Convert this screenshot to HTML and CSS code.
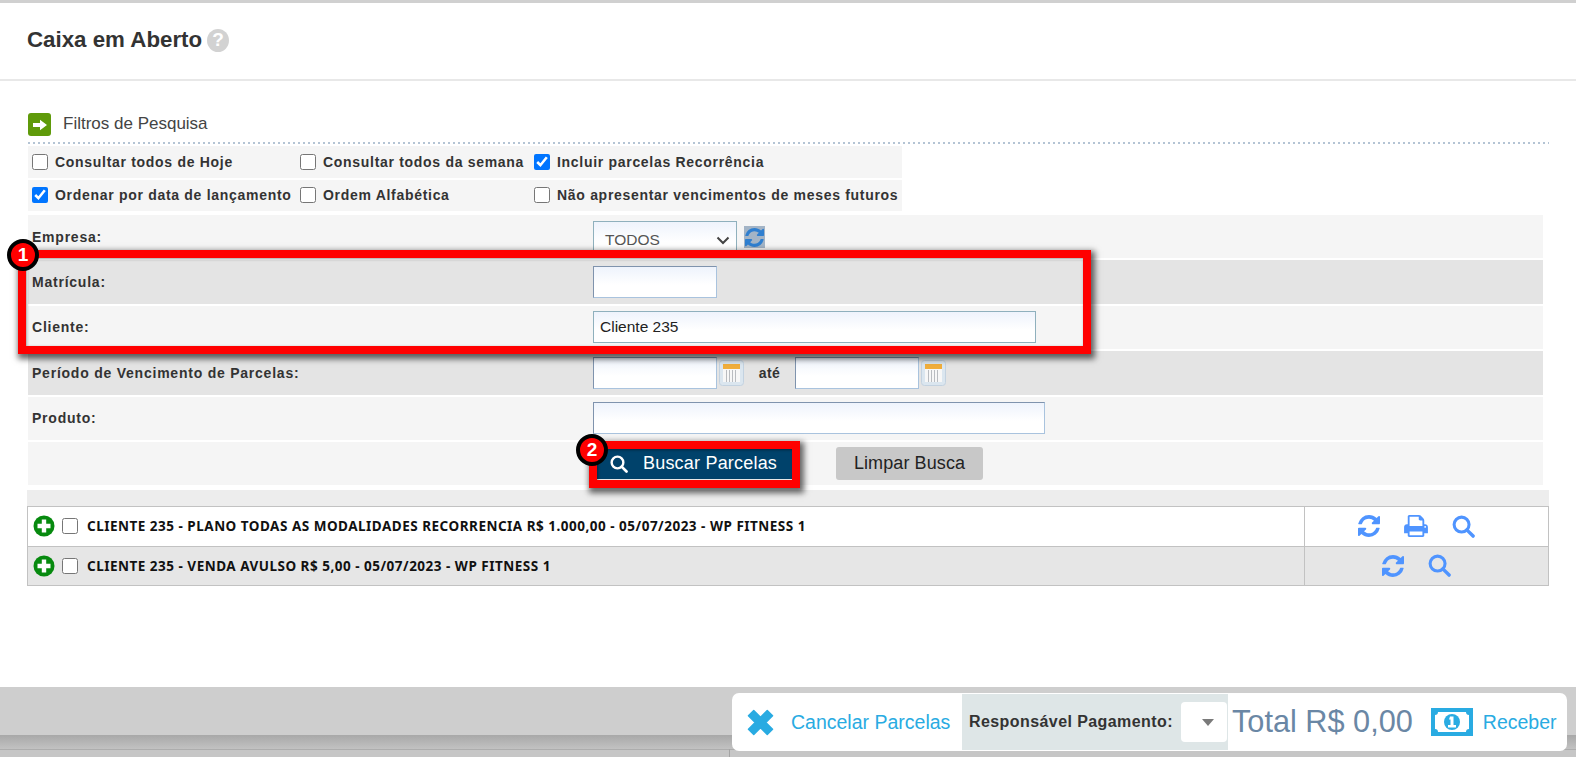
FILE: index.html
```html
<!DOCTYPE html>
<html lang="pt-BR">
<head>
<meta charset="utf-8">
<title>Caixa em Aberto</title>
<link rel="stylesheet" href="styles.css">
</head>
<body>
<svg class="defs" width="0" height="0">
  <symbol id="i-sync" viewBox="128 128 1536 1536"><path fill="currentColor" d="M1639 1056q0 5-1 7-64 268-268 434.500t-478 166.500q-146 0-282.500-55t-243.500-157l-129 129q-19 19-45 19t-45-19-19-45v-448q0-26 19-45t45-19h448q26 0 45 19t19 45-19 45l-137 137q71 66 161 102t187 36q134 0 250-65t186-179q11-17 53-117 8-23 30-23h192q13 0 22.500 9.500t9.500 22.500zm25-800v448q0 26-19 45t-45 19h-448q-26 0-45-19t-19-45 19-45l138-138q-148-137-349-137-134 0-250 65t-186 179q-11 17-53 117-8 23-30 23h-199q-13 0-22.500-9.500t-9.500-22.500v-7q65-268 270-434.500t480-166.500q146 0 284 55.500t245 156.500l130-129q19-19 45-19t45 19 19 45z"/></symbol>
  <symbol id="i-search" viewBox="0 0 24 24"><circle cx="10" cy="10" r="7.800" fill="none" stroke="currentColor" stroke-width="3.200"/><path d="M15.500 15.500 22 22" stroke="currentColor" stroke-width="3.600" stroke-linecap="round"/></symbol>
  <symbol id="i-print" viewBox="64 128 1664 1536"><path fill="currentColor" d="M448 1536h896v-256h-896v256zm0-640h896v-384h-160q-40 0-68-28t-28-68v-160h-640v640zm1152 64q0-26-19-45t-45-19-45 19-19 45 19 45 45 19 45-19 19-45zm128 0v416q0 13-9.500 22.500t-22.500 9.500h-224v160q0 40-28 68t-68 28h-960q-40 0-68-28t-28-68v-160h-224q-13 0-22.500-9.500t-9.500-22.500v-416q0-79 56.500-135.500t135.500-56.500h64v-544q0-40 28-68t68-28h672q40 0 88 20t76 48l152 152q28 28 48 76t20 88v256h64q79 0 135.500 56.500t56.500 135.500z"/></symbol>
  <symbol id="i-plus" viewBox="0 0 22 22"><circle cx="11" cy="11" r="10.500" fill="#078a0f"/><path fill="#fff" d="M8.800 4.500h4.400v4.300h4.300v4.400h-4.300v4.300H8.800v-4.300H4.500V8.800h4.300z"/></symbol>
  <symbol id="i-cal" viewBox="0 0 25 26"><rect x=".5" y=".5" width="24" height="25" rx="3" fill="#dbe6ef" stroke="#c3d2e0"/><rect x="4" y="4" width="17" height="5" fill="#f0ae3c"/><rect x="4" y="9" width="17" height="13" fill="#f7f7f7"/><path stroke="#b9bcc0" d="M7.500 10v12M10.500 10v12M13.500 10v12M16.500 10v12"/></symbol>
</svg>

<header class="page-head">
  <h1 class="page-title">Caixa em Aberto</h1>
  <span class="help">?</span>
</header>

<main class="content">
  <div class="filter-title">
    <span class="arrow-box"><svg width="14" height="12" viewBox="0 0 14 12"><path fill="#fff" d="M0 4h7V.8L14 6l-7 5.200V8H0z"/></svg></span>
    <span>Filtros de Pesquisa</span>
  </div>

  <div class="checks">
    <div class="check-row">
      <label class="chk c1"><input type="checkbox">Consultar todos de Hoje</label>
      <label class="chk c2"><input type="checkbox">Consultar todos da semana</label>
      <label class="chk c3"><input type="checkbox" checked>Incluir parcelas Recorrência</label>
    </div>
    <div class="check-row">
      <label class="chk c1"><input type="checkbox" checked>Ordenar por data de lançamento</label>
      <label class="chk c2"><input type="checkbox">Ordem Alfabética</label>
      <label class="chk c3"><input type="checkbox">Não apresentar vencimentos de meses futuros</label>
    </div>
  </div>

  <div class="form">
    <div class="form-row light">
      <label class="lbl">Empresa:</label>
      <div class="field up">
        <div class="select"><span>TODOS</span><svg width="14" height="9" viewBox="0 0 14 9"><path d="M1.500 1.500 7 7l5.500-5.500" fill="none" stroke="#444" stroke-width="2"/></svg></div>
        <span class="refresh"><svg width="19" height="19"><use href="#i-sync"/></svg></span>
      </div>
    </div>
    <div class="form-row dark">
      <label class="lbl">Matrícula:</label>
      <div class="field"><input class="inp w-mat" type="text"></div>
    </div>
    <div class="form-row light">
      <label class="lbl">Cliente:</label>
      <div class="field"><input class="inp w-cli" type="text" value="Cliente 235"></div>
    </div>
    <div class="form-row dark">
      <label class="lbl">Período de Vencimento de Parcelas:</label>
      <div class="field">
        <input class="inp w-mat" type="text">
        <svg class="cal" width="25" height="26"><use href="#i-cal"/></svg>
        <span class="ate">até</span>
        <input class="inp w-mat" type="text">
        <svg class="cal" width="25" height="26"><use href="#i-cal"/></svg>
      </div>
    </div>
    <div class="form-row light">
      <label class="lbl">Produto:</label>
      <div class="field"><input class="inp w-pro" type="text"></div>
    </div>
    <div class="form-row light actions">
      <div class="field">
        <button class="btn-primary" type="button"><svg width="18" height="18"><use href="#i-search"/></svg>Buscar Parcelas</button>
        <button class="btn-clear" type="button">Limpar Busca</button>
      </div>
    </div>
  </div>

  <div class="strip"></div>
  <div class="results">
    <div class="res-row">
      <div class="res-main"><svg class="plus" width="22" height="22"><use href="#i-plus"/></svg><input type="checkbox"><span class="res-text">CLIENTE 235 - PLANO TODAS AS MODALIDADES RECORRENCIA R$ 1.000,00 - 05/07/2023 - WP FITNESS 1</span></div>
      <div class="res-actions"><svg width="22" height="22"><use href="#i-sync"/></svg><svg width="24" height="22"><use href="#i-print"/></svg><svg width="23" height="23"><use href="#i-search"/></svg></div>
    </div>
    <div class="res-row alt">
      <div class="res-main"><svg class="plus" width="22" height="22"><use href="#i-plus"/></svg><input type="checkbox"><span class="res-text">CLIENTE 235 - VENDA AVULSO R$ 5,00 - 05/07/2023 - WP FITNESS 1</span></div>
      <div class="res-actions"><svg width="22" height="22"><use href="#i-sync"/></svg><svg width="23" height="23"><use href="#i-search"/></svg></div>
    </div>
  </div>
</main>

<div class="mark mark-one"><span class="badge">1</span></div>
<div class="mark mark-two"><span class="badge">2</span></div>

<div class="foot-bar"></div>
<div class="foot-under"><span class="sep"></span></div>

<div class="pay-panel">
  <a class="pay-cancel"><svg width="27" height="27" viewBox="0 0 28 28"><path fill="#29abe2" stroke="#29abe2" stroke-width="1.500" stroke-linejoin="round" d="M7 1.500 14 8.500l7-7 5.500 5.500-7 7 7 7-5.500 5.500-7-7-7 7L1.500 21l7-7-7-7z"/></svg><span>Cancelar Parcelas</span></a>
  <div class="pay-resp"><strong>Responsável Pagamento:</strong><span class="pay-select"><i class="caret"></i></span></div>
  <div class="pay-total">Total R$ 0,00</div>
  <a class="pay-receive"><svg width="42" height="28" viewBox="0 0 42 28"><path fill="#29abe2" fill-rule="evenodd" d="M0 0h42v28H0zM7 4a3 3 0 0 1-3 3v14a3 3 0 0 1 3 3h28a3 3 0 0 1 3-3V7a3 3 0 0 1-3-3z"/><circle cx="21" cy="14" r="8" fill="#29abe2"/><path fill="#fff" d="M19 8.500h3.500v8.500H25v2.500h-8V17h2.500v-5.500H18z"/></svg><span>Receber</span></a>
</div>
</body>
</html>
```
FILE: styles.css
```css
* { box-sizing: border-box; }
html, body { margin: 0; height: 757px; overflow: hidden; }
body { background: #fff; font-family: "Liberation Sans", Arial, sans-serif; color: #333; border-top: 3px solid #d0d0d0; }
.defs { position: absolute; }

.page-head { height: 78px; border-bottom: 2px solid #e8e8e8; display: flex; align-items: center; padding: 0 0 2px 27px; gap: 5px; }
.page-title { margin: 0; font-size: 22.300px; font-weight: 700; color: #333; }
.help { width: 22px; height: 23px; border-radius: 50%; background: #d2d2d2; color: #fff; font-size: 19px; font-weight: 700; display: flex; align-items: center; justify-content: center; }

.content { padding: 32px 33px 0 28px; }
.filter-title { display: flex; align-items: flex-start; gap: 12px; height: 31px; font-size: 17px; line-height: 21px; color: #444; margin-right: -6px; background: linear-gradient(90deg, #b4c4d4 2px, transparent 2px) 0 100% / 5px 2px repeat-x; }
.arrow-box { width: 23px; height: 23px; border-radius: 3px; background: #5f9a0a; display: flex; align-items: center; justify-content: center; }

.checks { width: 874px; margin-top: 2px; display: flex; flex-direction: column; gap: 2px; }
.check-row { display: flex; height: 31.500px; background: #f5f5f5; align-items: center; padding-left: 4px; }
.chk { display: flex; align-items: center; gap: 7px; font-size: 14px; font-weight: 700; letter-spacing: .7px; color: #333; white-space: nowrap; }
.chk input, .res-main input { width: 16px; height: 16px; margin: 0; flex: none; accent-color: #0075ff; }
.c1 { width: 268px; }
.c2 { width: 234px; }

.form { margin-top: 4px; display: flex; flex-direction: column; gap: 2px; }
.form-row { display: flex; align-items: center; height: 43.400px; }
.form-row.light { background: #f5f5f5; }
.form-row.dark { background: #e4e4e4; }
.lbl { width: 565px; padding-left: 4px; font-size: 14px; font-weight: 700; letter-spacing: .77px; color: #333; }
.field { display: flex; align-items: center; }
.actions .field { margin-left: 569px; }
.up { align-self: flex-start; padding-top: 6px; }

.inp, .select { height: 32px; border: 1px solid #a9c3de; border-top-color: #7f93ad; border-left-color: #7f93ad; background: linear-gradient(#eef3fc, #fff 60%); font: 15.500px "Liberation Sans", Arial, sans-serif; color: #222; padding: 0 6px; outline: none; }
.w-mat { width: 124px; }
.w-cli { width: 443px; border-color: #8fb0bd; }
.w-pro { width: 452px; }
.select { width: 144px; height: 36px; display: flex; align-items: center; justify-content: space-between; padding: 2px 6px 0 11px; color: #555; border-color: #8fb0bd; }
.refresh { margin-left: 7px; width: 21px; height: 22px; background: #a3b4c6; color: #2f7fd0; margin-top: -4px; display: flex; align-items: center; justify-content: center; }
.cal { margin-left: 2px; flex: none; }
.ate { width: 51px; text-align: center; font-size: 14px; font-weight: 700; letter-spacing: .5px; }

.btn-primary { width: 195px; height: 31px; border: 0; background: #00426b; color: #fff; font: 18px "Liberation Sans", Arial, sans-serif; letter-spacing: .2px; display: flex; align-items: center; gap: 15px; padding: 0 0 0 13px; margin: 0 44px 0 0; }
.btn-clear { width: 147px; height: 33px; border: 0; border-radius: 3px; background: #c8c8c8; color: #222; font: 18px "Liberation Sans", Arial, sans-serif; letter-spacing: .1px; }

.strip { height: 16px; margin: 4.600px -6px 0 -1px; background: #ededed; }
.results { margin: 0 -6px 0 -1px; border: 1px solid #c2c2c2; }
.res-row { display: flex; height: 39px; background: #fff; }
.res-row.alt { height: 39px; background: #e6e6e6; border-top: 1px solid #c2c2c2; }
.res-main { flex: 1; display: flex; align-items: center; padding-left: 5px; gap: 7px; }
.res-text { font-family: "Noto Sans", sans-serif; font-size: 13.500px; font-weight: 700; color: #111; margin-left: 2px; white-space: nowrap; letter-spacing: .5px; }
.res-actions { width: 244px; border-left: 1px solid #c2c2c2; display: flex; align-items: center; justify-content: center; gap: 24px; padding-right: 20px; color: #4f94ff; }

.mark { position: absolute; border: 8px solid #f00; box-shadow: 2px 3px 6px 2px rgba(0,0,0,.6), inset 1px 1px 3px rgba(0,0,0,.4); }
.mark-one { left: 18px; top: 250px; width: 1073px; height: 104px; }
.mark-two { left: 589px; top: 441px; width: 211px; height: 47px; }
.badge { position: absolute; width: 32px; height: 32px; left: -19px; top: -19px; border-radius: 50%; background: #f00; border: 4px solid #000; color: #fff; font-size: 19px; font-weight: 700; display: flex; align-items: center; justify-content: center; }
.mark-two .badge { left: -21px; top: -15px; }

.foot-bar { position: absolute; left: 0; right: 0; top: 687px; height: 48px; background: #cecece; }
.foot-under { position: absolute; left: 0; right: 0; top: 735px; height: 22px; background: linear-gradient(#a8a8a8, #c2c2c2 14px, #adadad 14px, #adadad 15px, #c6c6c6 15px); }
.sep { position: absolute; left: 729px; top: 14px; bottom: 0; width: 1px; background: #a4a4a4; }

.pay-panel { position: absolute; left: 732px; top: 693px; width: 835px; height: 58px; background: #fff; border-radius: 7px; display: flex; align-items: center; }
.pay-panel a { color: #29abe2; display: flex; align-items: center; }
.pay-cancel { width: 230px; font-size: 19.500px; gap: 17px; padding-left: 15px; }
.pay-resp { width: 266px; height: 56px; background: #dee6e7; display: flex; align-items: center; padding: 0 0 0 7px; font-size: 16px; letter-spacing: .42px; white-space: nowrap; }
.pay-resp strong { color: #333; }
.pay-select { margin-left: 8px; width: 46px; height: 40px; flex: none; background: #fff; border-radius: 4px; display: flex; align-items: center; justify-content: flex-end; padding-right: 13px; }
.caret { width: 0; height: 0; border: 6px solid transparent; border-top: 7px solid #7a7a7a; border-bottom: 0; }
.pay-total { font-size: 30.700px; color: #6a87a5; margin-left: 4px; white-space: nowrap; }
.pay-receive { font-size: 19.500px; gap: 10px; margin-left: 18px; }
```
